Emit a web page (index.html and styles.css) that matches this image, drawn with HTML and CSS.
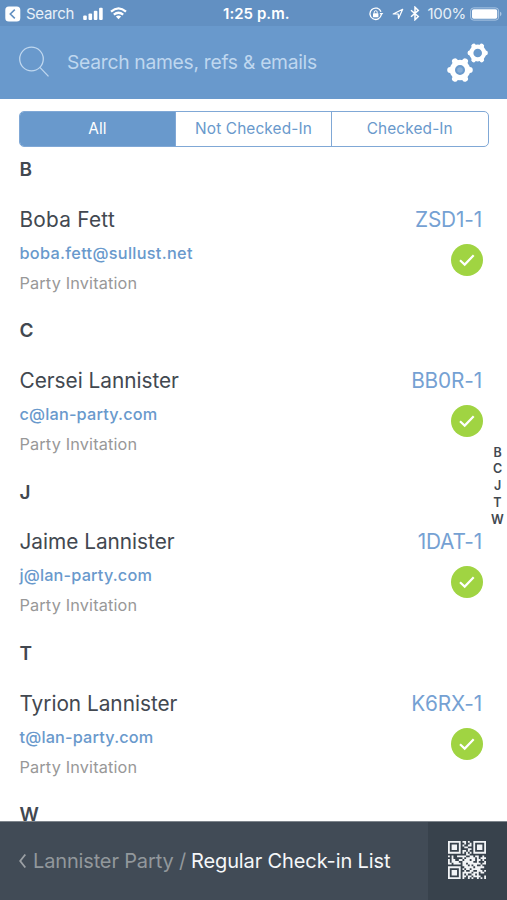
FILE: index.html
```html
<!DOCTYPE html>
<html lang="en">
<head>
<meta charset="utf-8">
<title>Regular Check-in List</title>
<link rel="stylesheet" href="styles.css">
</head>
<body>
<div class="app">
  <div class="status">
    <div class="status-left">
      <svg width="16" height="16" viewBox="0 0 16 16"><rect x=".3" y=".5" width="15" height="15" rx="3.5" fill="#fff"/><path d="M9.8 3.6 5.3 8l4.5 4.4" fill="none" stroke="#6290c2" stroke-width="1.6"/></svg>
      <span class="back-app">Search</span>
      <svg class="signal" width="21" height="14" viewBox="0 0 21 14" fill="#fff"><rect x=".2" y="8.5" width="3.6" height="4.5" rx="1"/><rect x="5.5" y="6.5" width="3.6" height="6.5" rx="1"/><rect x="10.8" y="3.8" width="3.6" height="9.2" rx="1"/><rect x="16.1" y=".8" width="3.6" height="12.2" rx="1"/></svg>
      <svg class="wifi" width="17" height="13" viewBox="0 0 17 13" fill="none" stroke="#fff" stroke-width="2.2"><path d="M1 4.7Q8.5-1.8 16 4.7M3.8 7.7q4.700-3.900 9.400 0"/><path d="M5.900 9.600q2.600-2 5.200 0L8.500 12.300Z" fill="#fff" stroke="none"/></svg>
    </div>
    <span class="time">1:25 p.m.</span>
    <div class="status-right">
      <svg width="15" height="14" viewBox="0 0 15 14"><path d="M12.300 7.500A5.700 5.700 0 1 1 12 4.800" fill="none" stroke="#fff" stroke-width="1.300"/><path d="m10.500 6 3.800 0-1.900 2.600Z" fill="#fff"/><rect x="4" y="6.200" width="5.400" height="4" rx=".5" fill="#fff"/><path d="M5.200 6.500V5.200a1.500 1.500 0 0 1 3 0v1.300" fill="none" stroke="#fff"/></svg>
      <svg class="location" width="12" height="12" viewBox="0 0 12 12"><path d="M1.200 6 10.700 1.300 6.500 10.500 6.200 6Z" fill="none" stroke="#fff" stroke-width="1.200" stroke-linejoin="round"/></svg>
      <svg class="bluetooth" width="10" height="15" viewBox="0 0 10 15"><path d="m1 4.200 7.300 6.300L5 13.700V1.200l3.300 3.200L1 10.700" fill="none" stroke="#fff" stroke-width="1.500"/></svg>
      <span class="percent">100%</span>
      <svg class="battery" width="32" height="14" viewBox="0 0 32 14"><rect x=".6" y=".9" width="28" height="12.200" rx="3" fill="none" stroke="#a9c5e3"/><rect x="2" y="2.300" width="25.200" height="9.400" rx="1.700" fill="#fff"/><path d="M30 4.800q1.500.6 1.500 2.200T30 9.200Z" fill="#a9c5e3"/></svg>
    </div>
  </div>

  <header class="search">
    <svg width="32" height="32" viewBox="0 0 32 32" fill="none" stroke="#bfd7ef" stroke-width="1.300"><circle cx="13.500" cy="13" r="11.800"/><path d="m21.900 21.400 8.600 9"/></svg>
    <span class="placeholder">Search names, refs &amp; emails</span>
    <svg class="gears" width="42" height="42" viewBox="446 40 42 42">
      <g stroke="#fff" stroke-width="6" stroke-linecap="round">
        <path d="M450.200 69h19.600M455 60.300l10 17.400M465 60.300l-10 17.400"/>
        <circle cx="460" cy="69" r="7.300" fill="#6999cc" stroke-width="6"/>
      </g>
      <circle cx="460" cy="69" r="3.900" fill="#87add6" stroke="#6999cc" stroke-width="2.200"/>
      <g stroke="#fff" stroke-width="4.800" stroke-linecap="round">
        <path d="M469.900 52h15.600M473.700 45.100l8 13.800M481.700 45.100l-8 13.800"/>
        <circle cx="477.700" cy="52" r="6.400" fill="#6999cc" stroke-width="4.200"/>
      </g>
    </svg>
  </header>

  <nav class="tabs">
    <span class="tab active">All</span>
    <span class="tab">Not Checked-In</span>
    <span class="tab">Checked-In</span>
  </nav>

  <main class="list">
    <section class="group">
      <h2>B</h2>
      <div class="guest">
        <div class="info"><div class="name n1">Boba Fett</div><div class="email e1">boba.fett@sullust.net</div><div class="type">Party Invitation</div></div>
        <div class="side"><div class="ref">ZSD1-1</div><svg class="check" viewBox="0 0 32 32"><circle cx="16" cy="16" r="16"/><path d="m9 16.300 4.700 4.300 9-9.300"/></svg></div>
      </div>
    </section>
    <section class="group">
      <h2>C</h2>
      <div class="guest">
        <div class="info"><div class="name">Cersei Lannister</div><div class="email">c@lan-party.com</div><div class="type">Party Invitation</div></div>
        <div class="side"><div class="ref">BB0R-1</div><svg class="check" viewBox="0 0 32 32"><circle cx="16" cy="16" r="16"/><path d="m9 16.300 4.700 4.300 9-9.300"/></svg></div>
      </div>
    </section>
    <section class="group">
      <h2>J</h2>
      <div class="guest">
        <div class="info"><div class="name">Jaime Lannister</div><div class="email">j@lan-party.com</div><div class="type">Party Invitation</div></div>
        <div class="side"><div class="ref">1DAT-1</div><svg class="check" viewBox="0 0 32 32"><circle cx="16" cy="16" r="16"/><path d="m9 16.300 4.700 4.300 9-9.300"/></svg></div>
      </div>
    </section>
    <section class="group">
      <h2>T</h2>
      <div class="guest">
        <div class="info"><div class="name">Tyrion Lannister</div><div class="email">t@lan-party.com</div><div class="type">Party Invitation</div></div>
        <div class="side"><div class="ref">K6RX-1</div><svg class="check" viewBox="0 0 32 32"><circle cx="16" cy="16" r="16"/><path d="m9 16.300 4.700 4.300 9-9.300"/></svg></div>
      </div>
    </section>
    <section class="group"><h2>W</h2></section>
  </main>

  <aside class="index"><span>B</span><span>C</span><span>J</span><span>T</span><span>W</span></aside>

  <footer class="bar">
    <div class="crumbs">
      <svg width="10" height="16" viewBox="0 0 10 16"><path d="M7.300 1.500 2.200 8l5.100 6.500" fill="none" stroke="#9ca1a5" stroke-width="1.800"/></svg>
      <span class="parent">Lannister Party /</span><span class="current">Regular Check-in List</span>
    </div>
    <div class="scan"><svg id="qr" width="38" height="38" viewBox="0 0 21 21"><path fill="#f2f4f6"/></svg></div>
  </footer>
</div>
<script src="qr.js"></script>
</body>
</html>
```
FILE: styles.css
```css
* { box-sizing: border-box; }
body { margin: 0; font-family: Inter, "Liberation Sans", sans-serif; background: #fff; }
svg { display: block; flex: none; }
.app { position: relative; width: 507px; height: 900px; display: flex; flex-direction: column; overflow: hidden; white-space: nowrap; }
.status { height: 26px; flex: none; background: #6290c2; color: #fff; display: grid; grid-template-columns: 218px auto 1fr; align-items: center; padding: 1px 5px 0 5px; font-size: 15px; }
.status-left, .status-right { display: flex; align-items: center; }
.status-right { justify-content: flex-end; }
.back-app { margin-left: 5px; width: 57px; letter-spacing: -.3px; color: #e8f0f8; }
.wifi { margin-left: 6px; }
.time { font-weight: 600; font-size: 15px; letter-spacing: .05px; }
.location { margin-left: 8px; }
.bluetooth { margin-left: 6px; }
.percent { margin: 0 4px 0 7px; letter-spacing: -.3px; color: #e8f0f8; }
.search { height: 72.500px; flex: none; background: #6999cc; display: flex; align-items: center; padding: 0 19px 1px 18px; }
.placeholder { margin-left: 17px; font-size: 19.300px; letter-spacing: -.29px; color: #bfd7ef; }
.gears { margin-left: auto; }
.tabs { height: 36px; flex: none; margin: 12px 18.500px 0 19px; display: grid; grid-template-columns: 155px 156px 1fr; border: 1px solid #80a8d6; border-radius: 5px; overflow: hidden; }
.tab { display: flex; align-items: center; justify-content: center; font-size: 15.400px; letter-spacing: .12px; color: #6999cc; }
.tab + .tab { border-left: 1px solid #80a8d6; }
.tab.active { background: #6999cc; color: #fff; }
.list { flex: 1; min-height: 0; overflow: hidden; padding: 5.500px 25px 0 19.500px; }
.group { height: 161.300px; color: #424850; }
h2 { margin: 0; height: 36px; line-height: 35px; font-size: 19px; font-weight: 600; }
.guest { display: flex; justify-content: space-between; padding-top: 15.900px; }
.name, .ref { height: 32px; line-height: 32px; font-size: 20.800px; }
.name { letter-spacing: -.02px; }
.n1 { letter-spacing: .25px; }
.email { height: 34px; line-height: 34px; font-size: 16.300px; font-weight: 500; letter-spacing: .17px; color: #6999cc; }
.e1 { letter-spacing: .3px; }
.type { height: 27px; line-height: 27px; font-size: 16.300px; letter-spacing: .15px; color: #989898; }
.side { display: flex; flex-direction: column; align-items: flex-end; }
.ref { letter-spacing: -.15px; color: #75a1d3; }
.check { width: 32px; height: 32px; margin: 8px -.500px 0 0; fill: #a0d442; }
.check path { fill: none; stroke: #fff; stroke-width: 2.200; }
.index { position: absolute; left: 489px; top: 444.500px; width: 17px; display: flex; flex-direction: column; align-items: center; font-size: 12.500px; font-weight: 600; color: #424850; }
.index span { height: 16.900px; line-height: 16.900px; }
.bar { height: 79.500px; flex: none; background: #414b56; border-top: 1px solid #7e858c; display: flex; font-size: 20px; }
.crumbs { flex: 1; display: flex; align-items: center; padding-left: 18px; }
.parent { margin-left: 5px; width: 158px; color: #92989c; letter-spacing: -.15px; }
.current { color: #f5f7f9; letter-spacing: -.12px; }
.scan { width: 79px; flex: none; display: flex; align-items: center; justify-content: center; padding: 0 1px 2px 0; background: #38424c; }
```
FILE: qr.js
```javascript
const rows = [
  "111111101101001111111",
  "100000100100101000001",
  "101110101001101011101",
  "101110100110001011101",
  "101110100001101011101",
  "100000101101001000001",
  "111111101010101111111",
  "000000000011000000000",
  "101001111100110110010",
  "001000001011111010111",
  "101100110111011011010",
  "101111001111110010001",
  "110111101101111111011",
  "000000001110101100100",
  "111111100111110111110",
  "100000101011011111000",
  "101110100100110011101",
  "101110101111101110110",
  "101110101010011010000",
  "100000101101101111001",
  "111111101001010010101"
];
let d = "";
rows.forEach((row, y) => {
  [...row].forEach((cell, x) => {
    if (cell === "1") d += `M${x} ${y}h1v1h-1z`;
  });
});
document.querySelector("#qr path").setAttribute("d", d);
```
